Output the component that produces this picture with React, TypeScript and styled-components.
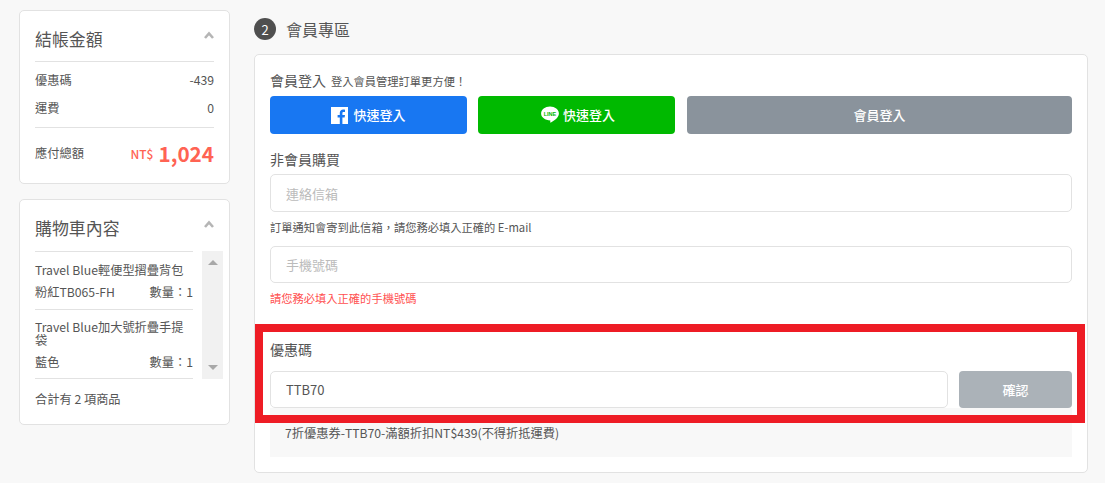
import styled, { createGlobalStyle } from "styled-components";

const GlobalStyle = createGlobalStyle`
  html, body {
    margin: 0;
    padding: 0;
    background: #f8f8f8;
    height: 483px;
    overflow: hidden;
    font-family: "Noto Sans CJK TC", "Noto Sans", sans-serif;
    color: #555;
  }
  * { box-sizing: border-box; }
`;

const Page = styled.div`
  display: flex;
  align-items: flex-start;
  gap: 24px;
  padding: 10px 17px 0 19px;
`;

// Sidebar
const Sidebar = styled.aside`
  width: 211px;
  flex-shrink: 0;
  display: flex;
  flex-direction: column;
  gap: 15px;
`;

const Panel = styled.section`
  background: #fff;
  border: 1px solid #e2e2e2;
  border-radius: 5px;
  padding: 14px 15px 0;
`;

const PanelHead = styled.div<{ $plain?: boolean }>`
  display: flex;
  justify-content: space-between;
  align-items: flex-start;
  height: 37px;
  border-bottom: ${({ $plain }) => ($plain ? "0" : "1px solid #e2e2e2")};
`;

const PanelTitle = styled.h3`
  margin: 0;
  font-size: 16.92px;
  font-weight: 400;
  line-height: 27px;
  color: #555;
`;

const Chevron = styled.svg`
  width: 10px;
  height: 8px;
  margin-top: 6px;
`;

const SummaryRow = styled.div`
  display: flex;
  justify-content: space-between;
  align-items: center;
  height: 28px;
  font-size: 12.22px;
  color: #555;
`;

const SummaryRows = styled.div`
  padding: 4px 0 5px;
  border-bottom: 1px solid #e2e2e2;
`;

const TotalRow = styled.div`
  display: flex;
  justify-content: space-between;
  align-items: center;
  height: 50px;
  margin-bottom: 5px;
  font-size: 12.22px;
`;

const TotalPrice = styled.span`
  display: flex;
  align-items: center;
  gap: 5px;
  color: #ff6353;
  font-weight: 500;
  font-size: 12px;
`;

const TotalNumber = styled.span`
  font-size: 20.7px;
  font-weight: 700;
  line-height: 26px;
`;

const CartBody = styled.div`
  display: flex;
  height: 128px;
  margin-right: -9px;
  gap: 9px;
`;

const CartList = styled.div`
  flex: 1;
  min-width: 0;
  border-top: 1px solid #e2e2e2;
`;

const CartItem = styled.div`
  padding: 11px 0 7px;
  border-bottom: 1px solid #e2e2e2;
  font-size: 12.22px;

  &:first-child {
    padding: 12px 0 8px;
  }
`;

const CartName = styled.div`
  line-height: 13px;
  margin-bottom: 6px;
`;

const CartMeta = styled.div`
  display: flex;
  justify-content: space-between;
  line-height: 18px;
`;

const FakeScrollbar = styled.div`
  width: 21px;
  background: #f1f1f1;
  display: flex;
  flex-direction: column;
  justify-content: space-between;
  align-items: center;
  padding: 9px 0 9px;
`;

const Arrow = styled.div<{ $down?: boolean }>`
  width: 0;
  height: 0;
  border-left: 5px solid transparent;
  border-right: 5px solid transparent;
  border-bottom: ${({ $down }) => ($down ? "0" : "5px solid #a8a8a8")};
  border-top: ${({ $down }) => ($down ? "5px solid #a8a8a8" : "0")};
`;

const CartFooter = styled.div`
  height: 45px;
  padding-top: 11px;
  font-size: 12.22px;
  line-height: 18px;
`;

// Main column
const Main = styled.main`
  flex: 1;
  min-width: 0;
`;

const StepHead = styled.div`
  display: flex;
  align-items: center;
  gap: 10px;
  height: 22px;
  margin: 8px 0 14px;
`;

const StepBadge = styled.span`
  width: 22px;
  height: 22px;
  border-radius: 50%;
  background: #4f4f4f;
  color: #fff;
  font-size: 13px;
  display: flex;
  align-items: center;
  justify-content: center;
`;

const StepTitle = styled.h2`
  margin: 0;
  font-size: 16px;
  font-weight: 400;
  color: #555;
`;

const MainCard = styled.section`
  position: relative;
  height: 419px;
  background: #fff;
  border: 1px solid #e2e2e2;
  border-radius: 5px;
  padding: 15px 15px 0;
`;

const LoginLine = styled.div`
  display: flex;
  align-items: baseline;
  gap: 5px;
  height: 26px;
  line-height: 21px;
  font-size: 14px;
`;

const LoginHint = styled.span`
  font-size: 11.28px;
`;

const LoginButtons = styled.div`
  display: grid;
  grid-template-columns: 197px 197px 1fr;
  column-gap: 11.4px;
`;

const LoginButton = styled.button<{ $bg: string }>`
  height: 38px;
  border: 0;
  border-radius: 4px;
  background: ${({ $bg }) => $bg};
  color: #fff;
  font: 500 13px "Noto Sans CJK TC", sans-serif;
  display: flex;
  align-items: center;
  justify-content: center;
  gap: 4px;
  padding: 0;

  span {
    position: relative;
    top: -1px;
  }
`;

const FacebookGlyph = styled.svg`
  width: 17px;
  height: 17px;
  margin-right: 1px;
`;

const LineGlyph = styled.svg`
  width: 18px;
  height: 18px;
  margin-left: 2px;
`;

const SectionLabel = styled.div`
  font-size: 14px;
  line-height: 21px;
  margin-top: 15px;
  margin-bottom: 4px;
`;

const Field = styled.input<{ $short?: boolean }>`
  display: block;
  width: 100%;
  height: ${({ $short }) => ($short ? "37px" : "38px")};
  border: 1px solid #e2e2e2;
  border-radius: 5px;
  padding: 0 15px;
  font: 400 13px "Noto Sans CJK TC", sans-serif;
  color: #555;
  outline: none;
  background: #fff;

  &::placeholder { color: #bbb; opacity: 1; }
`;

const Note = styled.div<{ $error?: boolean }>`
  font-size: 11.28px;
  line-height: 17px;
  margin: 7px 0 ${({ $error }) => ($error ? "0" : "10px")};
  color: ${({ $error }) => ($error ? "#ff5050" : "#555")};
`;

const CouponLabel = styled.div`
  font-size: 14px;
  line-height: 21px;
  margin-top: 32px;
  margin-bottom: 11px;
`;

const CouponRow = styled.div`
  display: flex;
  gap: 11px;
`;

const ConfirmButton = styled.button`
  width: 113px;
  flex-shrink: 0;
  height: 37px;
  border: 0;
  border-radius: 4px;
  background: #abb2b8;
  color: #fff;
  font: 500 13px "Noto Sans CJK TC", sans-serif;
`;

const CouponInfo = styled.div`
  height: 49px;
  background: #f8f8f8;
  padding: 16px 15px 0;
  font-size: 12.22px;
  line-height: 18px;
`;

// the red annotation drawn on top of the screenshot
const Highlight = styled.div`
  position: absolute;
  left: 0;
  right: 2px;
  top: 269px;
  height: 99px;
  border: 8px solid #ee1c25;
  pointer-events: none;
`;

const FacebookIcon = () => (
  <FacebookGlyph viewBox="0 0 17 17">
    <path
      fill="#fff"
      d="M0 0h17v17h-5.6v-6.5h2.2l.4-2.6h-2.6V6.3c0-.8.3-1.3 1.3-1.3H14V2.7c-.3 0-1-.1-1.9-.1-1.9 0-3.3 1.2-3.3 3.4v1.9H6.6v2.6h2.2V17H0z"
    />
  </FacebookGlyph>
);

const LineIcon = () => (
  <LineGlyph viewBox="0 0 18 18">
    <path
      fill="#fff"
      d="M9 .5c4.9 0 8.9 3.1 8.9 7 0 3.6-3.5 6.7-8 8.9-.6.3-.8.1-.7-.4l.2-1.6C4.1 14.4.1 11.3.1 7.5.1 3.6 4.1.5 9 .5z"
    />
    <text x="9" y="9.8" textAnchor="middle" fontSize="5.5" fontWeight="700" fill="#00b900" fontFamily="Liberation Sans, sans-serif">
      LINE
    </text>
  </LineGlyph>
);

const ChevronUp = () => (
  <Chevron viewBox="0 0 10 8">
    <path d="M1 7l4-4.5L9 7" fill="none" stroke="#b5b5b5" strokeWidth="2.6" />
  </Chevron>
);

export default function App() {
  return (
    <>
      <GlobalStyle />
      <Page>
        <Sidebar>
          <Panel>
            <PanelHead>
              <PanelTitle>結帳金額</PanelTitle>
              <ChevronUp />
            </PanelHead>
            <SummaryRows>
              <SummaryRow>
                <span>優惠碼</span>
                <span>-439</span>
              </SummaryRow>
              <SummaryRow>
                <span>運費</span>
                <span>0</span>
              </SummaryRow>
            </SummaryRows>
            <TotalRow>
              <span>應付總額</span>
              <TotalPrice>
                NT$ <TotalNumber>1,024</TotalNumber>
              </TotalPrice>
            </TotalRow>
          </Panel>

          <Panel>
            <PanelHead $plain>
              <PanelTitle>購物車內容</PanelTitle>
              <ChevronUp />
            </PanelHead>
            <CartBody>
              <CartList>
                <CartItem>
                  <CartName>Travel Blue輕便型摺疊背包</CartName>
                  <CartMeta>
                    <span>粉紅TB065-FH</span>
                    <span>數量：1</span>
                  </CartMeta>
                </CartItem>
                <CartItem>
                  <CartName>Travel Blue加大號折疊手提袋</CartName>
                  <CartMeta>
                    <span>藍色</span>
                    <span>數量：1</span>
                  </CartMeta>
                </CartItem>
              </CartList>
              <FakeScrollbar>
                <Arrow />
                <Arrow $down />
              </FakeScrollbar>
            </CartBody>
            <CartFooter>合計有 2 項商品</CartFooter>
          </Panel>
        </Sidebar>

        <Main>
          <StepHead>
            <StepBadge>2</StepBadge>
            <StepTitle>會員專區</StepTitle>
          </StepHead>
          <MainCard>
            <LoginLine>
              會員登入
              <LoginHint>登入會員管理訂單更方便！</LoginHint>
            </LoginLine>
            <LoginButtons>
              <LoginButton $bg="#1877f2">
                <FacebookIcon />
                <span>快速登入</span>
              </LoginButton>
              <LoginButton $bg="#00b900">
                <LineIcon />
                <span>快速登入</span>
              </LoginButton>
              <LoginButton $bg="#8a939c">
                <span>會員登入</span>
              </LoginButton>
            </LoginButtons>
            <SectionLabel>非會員購買</SectionLabel>
            <Field placeholder="連絡信箱" readOnly />
            <Note>訂單通知會寄到此信箱，請您務必填入正確的 E-mail</Note>
            <Field $short placeholder="手機號碼" readOnly />
            <Note $error>請您務必填入正確的手機號碼</Note>
            <CouponLabel>優惠碼</CouponLabel>
            <CouponRow>
              <Field $short value="TTB70" readOnly />
              <ConfirmButton>確認</ConfirmButton>
            </CouponRow>
            <CouponInfo>7折優惠券-TTB70-滿額折扣NT$439(不得折抵運費)</CouponInfo>
            <Highlight />
          </MainCard>
        </Main>
      </Page>
    </>
  );
}
